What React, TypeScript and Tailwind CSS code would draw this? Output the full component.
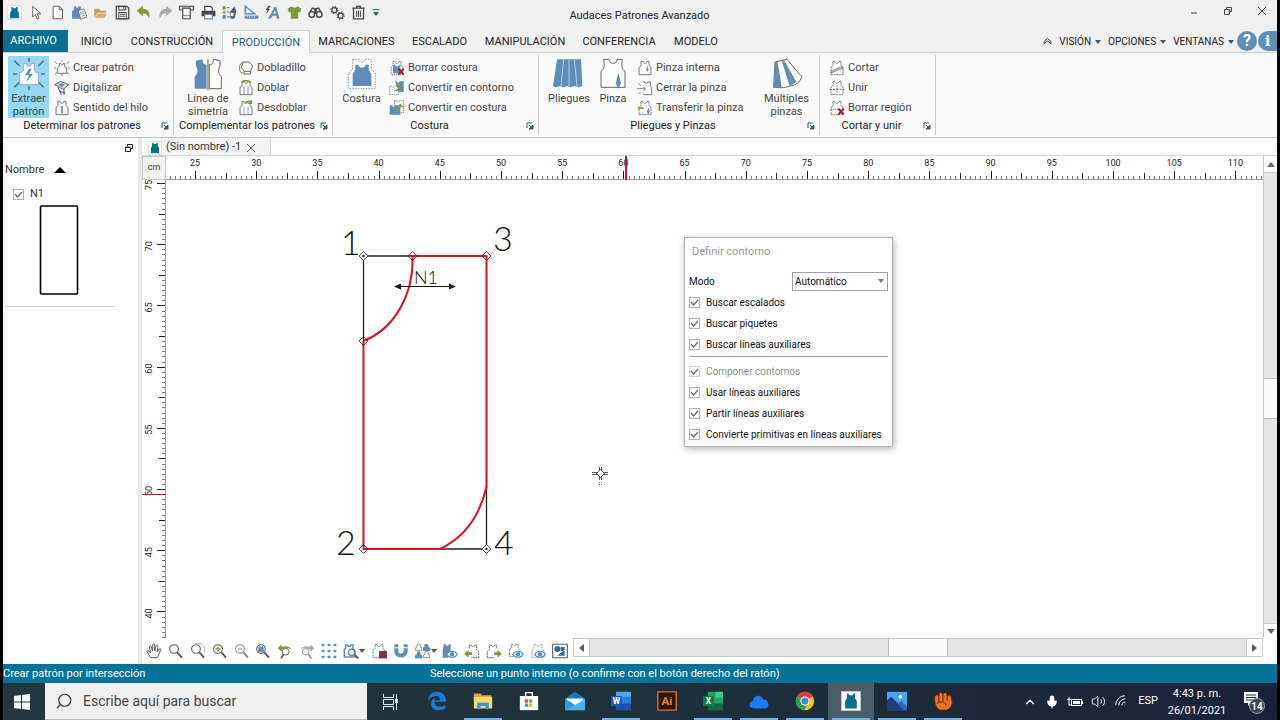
import { ReactNode, useEffect, useRef, useState } from 'react';
import { ChevronUp, Mic, Search, Volume2, Wifi } from 'lucide-react';

const VEST = 'M6 2h3c0 4 6 4 6 0h3v5c0 2 1 3 3 4v11H3V11c2-1 3-2 3-4z';
const BLUE = '#5d8db8';
const GREY = '#5a5a5a';
const GREEN = '#7c9a3a';

function Svg({ children, size = 16 }: { children: ReactNode; size?: number }) {
  return (
    <svg width={size} height={size} viewBox="0 0 24 24" fill="none" className="shrink-0" aria-hidden="true">
      {children}
    </svg>
  );
}

function Vest({ fill = 'none', stroke = GREY, dash }: { fill?: string; stroke?: string; dash?: string }) {
  return <path d={VEST} fill={fill} stroke={stroke} strokeWidth="1.2" strokeDasharray={dash} />;
}

function Lens({ sign, color = GREY }: { sign?: ReactNode; color?: string }) {
  return (
    <>
      <circle cx="9" cy="9" r="6.5" stroke={color} strokeWidth="1.6" fill="#fff" />
      <path d="M14 14l7 8" stroke={color} strokeWidth="3" />
      {sign}
    </>
  );
}

function Rays() {
  return (
    <path d="M1 2l4 4M23 2l-4 4M12 0v3M0 12h3M24 12h-3M1 22l4-4M23 22l-4-4M12 24v-3" stroke="#47799b" strokeWidth="1.2" />
  );
}

function Eye() {
  return (
    <>
      <path d="M7 17c4-6 12-6 16 0-4 6-12 6-16 0z" fill="#fff" stroke={BLUE} strokeWidth="1.6" />
      <circle cx="15" cy="17" r="3.4" fill={BLUE} />
    </>
  );
}

function Cross() {
  return <path d="M14 13l8 9M22 13l-8 9" stroke="#a51d2d" strokeWidth="3" />;
}

function Down({ className = '' }: { className?: string }) {
  return (
    <svg width="6" height="4" viewBox="0 0 6 4" className={`shrink-0 ${className}`} aria-hidden="true">
      <path d="M0 0h6L3 4z" fill="currentColor" />
    </svg>
  );
}

function Logo() {
  return (
    <>
      <path d="M.5.5h23v23H.5z" fill="#fff" stroke="#b5d0dc" />
      <path d="M7 3h2c0 3 6 3 6 0h2v6l2 3v9H5v-9l2-3z" fill="#066f93" />
    </>
  );
}

const quickTools: { label: string; icon: ReactNode }[] = [
  { label: 'Audaces', icon: <Logo /> },
  { label: 'Seleccionar', icon: <path d="M6 2v17l4-4 3 7 3-1-3-7h6z" stroke={GREY} strokeWidth="1.5" fill="#fff" /> },
  { label: 'Nuevo', icon: <path d="M5 2h10l5 5v15H5zM15 2v5h5" stroke={GREY} strokeWidth="1.5" fill="#fff" /> },
  {
    label: 'Nuevo patrón',
    icon: (
      <>
        <path d="M3 2h3c0 3 5 3 5 0h3v6l3 2v12H0V10l3-2z" fill={BLUE} />
        <path d="M10 9l9-3 5 13-10 4z" fill="#fff" stroke={GREY} strokeWidth="1.2" />
        <path d="M13 12l6-2M14 15l6-2M15 18l6-2" stroke={GREY} />
      </>
    ),
  },
  {
    label: 'Abrir',
    icon: (
      <>
        <path d="M2 20V6h8l2 3h9v4" fill="#c69a63" />
        <path d="M2 21l5-8h16l-4 8z" fill="#d8a76a" stroke="#fff" />
      </>
    ),
  },
  {
    label: 'Guardar',
    icon: (
      <>
        <path d="M2 2h17l3 3v17H2z" stroke="#444" strokeWidth="2" />
        <path d="M6 2h11v6H6zM6 12h12v10H6z" stroke="#444" strokeWidth="1.6" />
        <path d="M8 15h8M8 18h8M14 3v4" stroke="#444" strokeWidth="1.4" />
      </>
    ),
  },
  { label: 'Deshacer', icon: <path d="M1 9l10-8v5c8 0 12 6 10 15-2-5-5-8-10-8v5z" fill={GREEN} /> },
  { label: 'Rehacer', icon: <path d="M23 9L13 1v5C5 6 1 12 3 21c2-5 5-8 10-8v5z" fill="#ababab" /> },
  {
    label: 'Plotter',
    icon: (
      <>
        <path d="M1 2h22v6H1z" stroke="#444" strokeWidth="1.8" />
        <path d="M6 5h12v17H6z" stroke="#444" strokeWidth="1.8" fill="#f6f6f6" />
        <path d="M6 17h12" stroke="#444" />
      </>
    ),
  },
  {
    label: 'Imprimir',
    icon: (
      <>
        <path d="M6 9V2h9l3 3v4" stroke="#444" strokeWidth="2" fill="#fff" />
        <path d="M1 9h22v9h-5v-3H6v3H1z" fill="#444" />
        <path d="M6 15h12v7H6z" fill="#fff" stroke={BLUE} strokeWidth="2" />
      </>
    ),
  },
  {
    label: 'Materiales',
    icon: (
      <>
        <path d="M1 2h5v5H1z" fill="#6d9540" />
        <path d="M1 9h5v5H1z" fill="#d3a34c" />
        <path d="M1 16h5v6H1z" fill={BLUE} />
        <path d="M8 4h4M8 11h3M8 19h5" stroke={BLUE} strokeWidth="2" />
        <path d="M12 12l8-10 3 8-3 12h-6z" fill="#55616b" />
        <path d="M14 12l5 1-1 5-4-1z" fill="#fff" />
      </>
    ),
  },
  {
    label: 'Medir',
    icon: (
      <>
        <path d="M2 2v12h15z" stroke={BLUE} strokeWidth="2.4" />
        <path d="M1 17h22v5H1z" fill={BLUE} />
        <path d="M5 17v3M9 17v3M13 17v3M17 17v3" stroke="#fff" />
      </>
    ),
  },
  {
    label: 'Texto automático',
    icon: (
      <>
        <path d="M5 22L15 3h3l5 19h-4l-1-5h-6l-3 5zM13 14h4l-1-6z" fill={BLUE} fillRule="evenodd" />
        <path d="M6 1L1 8h3l-2 6 6-8H5l4-5z" fill="#333" />
      </>
    ),
  },
  { label: 'Prenda', icon: <path d="M7 2c2 3 8 3 10 0l6 4-2 6-3-1v11H6V11l-3 1-2-6z" fill={GREEN} /> },
  {
    label: 'Buscar',
    icon: (
      <>
        <circle cx="6" cy="15" r="4.5" stroke="#444" strokeWidth="2.2" />
        <circle cx="18" cy="15" r="4.5" stroke="#444" strokeWidth="2.2" />
        <path d="M3 12l4-7 4 1v8M21 12l-4-7-4 1v8" stroke="#444" strokeWidth="2.2" />
      </>
    ),
  },
  {
    label: 'Configurar',
    icon: (
      <>
        <circle cx="7" cy="8" r="4" stroke="#444" strokeWidth="2" />
        <circle cx="7" cy="8" r="5.5" stroke="#444" strokeWidth="2" strokeDasharray="2 2.3" />
        <circle cx="17" cy="17" r="4" stroke="#444" strokeWidth="2" />
        <circle cx="17" cy="17" r="5.5" stroke="#444" strokeWidth="2" strokeDasharray="2 2.3" />
      </>
    ),
  },
  {
    label: 'Eliminar',
    icon: (
      <>
        <path d="M2 5h20M9 5V2h6v3M4 5v17h16V5" stroke="#444" strokeWidth="2" />
        <path d="M9 9v10M12 9v10M15 9v10" stroke="#444" strokeWidth="1.6" />
      </>
    ),
  },
];

const tabs = [
  { name: 'INICIO', width: 'w-[51px]' },
  { name: 'CONSTRUCCIÓN', width: 'w-[100px]' },
  { name: 'PRODUCCIÓN', width: 'w-[88px]' },
  { name: 'MARCACIONES', width: 'w-[93px]' },
  { name: 'ESCALADO', width: 'w-[73px]' },
  { name: 'MANIPULACIÓN', width: 'w-[98px]' },
  { name: 'CONFERENCIA', width: 'w-[90px]' },
  { name: 'MODELO', width: 'w-[64px]' },
];

function BigTool({ icon, lines, width, active }: { icon: ReactNode; lines: string[]; width: string; active?: boolean }) {
  return (
    <button className={`flex h-[62px] shrink-0 flex-col items-center pt-[2px] text-[11px] leading-[13px] ${width} ${active ? 'bg-[#94d8f1]' : ''}`}>
      <Svg size={32}>{icon}</Svg>
      <span className="mt-[2px] whitespace-nowrap">
        {lines.map(line => (
          <span key={line} className="block">{line}</span>
        ))}
      </span>
    </button>
  );
}

function SmallTools({ items }: { items: { label: string; icon: ReactNode }[] }) {
  return (
    <div className="flex flex-col pt-[2px]">
      {items.map(item => (
        <button key={item.label} className="flex h-[21px] items-center gap-[3px] whitespace-nowrap text-[11px]">
          <Svg>{item.icon}</Svg>
          {item.label}
        </button>
      ))}
    </div>
  );
}

function Group({ title, width, pad, children }: { title: string; width: string; pad: string; children: ReactNode }) {
  return (
    <section className={`my-[2px] flex shrink-0 flex-col border-r border-[#c9c9c9] ${width}`}>
      <div className={`flex h-[63px] pt-[1px] ${pad}`}>{children}</div>
      <div className="flex h-[18px] items-center pr-1 pb-[2px] text-[11px] text-[#222]">
        <span className="flex-1 whitespace-nowrap text-center">{title}</span>
        <button aria-label={`Opciones de ${title}`}>
          <svg width="8" height="8" viewBox="0 0 8 8" fill="none">
            <path d="M1 6V1h5" stroke="#2f5f6f" />
            <path d="M3 3l3 3M7 3v4H3z" stroke="#2f5f6f" fill="#2f5f6f" />
          </svg>
        </button>
      </div>
    </section>
  );
}

function Ribbon() {
  return (
    <div className="flex h-[85px] shrink-0 overflow-hidden border-b border-[#c4c4c4] bg-[#fafafa] text-[#444]">
      <Group title="Determinar los patrones" width="w-[171px]" pad="pl-[5px] gap-[5px]">
        <BigTool
          active
          width="w-[41px]"
          lines={['Extraer', 'patrón']}
          icon={
            <>
              <Rays />
              <path d="M8 4h2c0 3 4 3 4 0h2v4c0 2 1 3 3 3v9H5v-9c2 0 3-1 3-3z" fill="#fff" stroke="#8a9aa5" strokeWidth=".6" />
              <path d="M12 8l-3 5h3l-2 5 5-6h-3l2-4z" fill={BLUE} />
            </>
          }
        />
        <SmallTools
          items={[
            {
              label: 'Crear patrón',
              icon: (
                <>
                  <Rays />
                  <path d="M8 5h2c0 3 4 3 4 0h2v5l3 2v8H5v-8l3-2z" stroke={GREY} strokeWidth="1.3" fill="#fff" />
                </>
              ),
            },
            {
              label: 'Digitalizar',
              icon: (
                <>
                  <path d="M1 7l9-5 12 5-8 7z" fill="#cbd9e5" stroke={GREY} strokeWidth="1.4" />
                  <path d="M6 7l5-2 5 2-4 3z" fill={BLUE} />
                  <path d="M6 11l5 11M15 14v8M9 17l8 3" stroke={GREY} strokeWidth="1.6" />
                </>
              ),
            },
            { label: 'Sentido del hilo', icon: <><Vest /><path d="M12 9v11" stroke={BLUE} strokeWidth="2.4" /></> },
          ]}
        />
      </Group>

      <Group title="Complementar los patrones" width="w-[159px]" pad="pl-[13px] gap-[9px]">
        <BigTool
          width="w-[42px]"
          lines={['Línea de', 'simetría']}
          icon={
            <>
              <path d="M11 23H2v-9c2-2 3-4 1-8V2l5-1c0 3 1 4 3 4z" fill={BLUE} />
              <path d="M13 23h9v-9c-2-2-3-4-1-8V2l-5-1c0 3-1 4-3 4z" fill="#fff" stroke={GREY} strokeWidth=".7" />
              <path d="M12 1v23" stroke={GREEN} strokeWidth="1" />
            </>
          }
        />
        <SmallTools
          items={[
            {
              label: 'Dobladillo',
              icon: (
                <>
                  <path d="M8 3h9l5 6-3 8H9l-4-6z" stroke={GREY} strokeWidth="1.4" />
                  <path d="M9 17v4h10v-4" stroke={GREY} strokeWidth="1.4" />
                  <path d="M8 3C0 7 1 17 7 20" stroke={GREEN} strokeWidth="1.6" />
                </>
              ),
            },
            { label: 'Doblar', icon: <><Vest /><path d="M9 10v12M15 10v12" stroke={GREY} /><path d="M5 4c4-4 10-4 14 0" stroke={GREEN} strokeWidth="2.4" /></> },
            { label: 'Desdoblar', icon: <><Vest /><path d="M9 10v12M15 10v12" stroke={BLUE} /><path d="M10 5c3-4 7-4 10-1M20 0v5h-5" stroke={GREEN} strokeWidth="2" /></> },
          ]}
        />
      </Group>

      <Group title="Costura" width="w-[206px]" pad="pl-[8px] gap-[7px]">
        <BigTool
          width="w-[41px]"
          lines={['Costura']}
          icon={
            <>
              <path d="M5 1h5c0 3 4 3 4 0h5v6c0 2 1 3 3 4v12H2V11c2-1 3-2 3-4z" stroke="#7290ab" strokeWidth=".7" strokeDasharray="1 1" />
              <path d="M7 5h2c1 3 5 3 6 0h2v4l2 3v9H5v-9l2-3z" fill={BLUE} />
            </>
          }
        />
        <SmallTools
          items={[
            { label: 'Borrar costura', icon: <><Vest dash="2 1" /><path d="M7 7h2c0 3 6 3 6 0h2v13H6v-8z" fill={BLUE} /><Cross /></> },
            {
              label: 'Convertir en contorno',
              icon: (
                <>
                  <path d="M9 2h3c0 3 4 3 4 0h6v16H11V7z" fill={BLUE} />
                  <path d="M1 9h3c0 3 4 3 4 0h6v13H1z" fill="#fff" stroke={GREY} strokeDasharray="2 1" />
                  <path d="M8 16c5 0 8-3 8-8M12 11l4-4 4 4" stroke={GREEN} strokeWidth="2" />
                </>
              ),
            },
            {
              label: 'Convertir en costura',
              icon: (
                <>
                  <path d="M8 1h4c0 3 4 3 4 0h6v18H9z" stroke={GREY} strokeDasharray="2 1" />
                  <path d="M1 8h4c0 3 4 3 4 0h5l3 4v10H1z" fill={BLUE} />
                  <path d="M8 18c7 0 9-4 9-10M13 11l4-4 4 4" stroke={GREEN} strokeWidth="2" />
                </>
              ),
            },
          ]}
        />
      </Group>

      <Group title="Pliegues y Pinzas" width="w-[281px]" pad="pl-[8px]">
        <BigTool
          width="w-[44px]"
          lines={['Pliegues']}
          icon={
            <>
              <path d="M3 1h18l1 20-3 1-3-1-3 1-2-1-3 1-3-1-3 1-2-1z" fill={BLUE} />
              <path d="M8 1L6 21M12 1v20M16 1l2 20" stroke="#b8d2e8" strokeWidth=".7" />
            </>
          }
        />
        <BigTool
          width="w-[44px]"
          lines={['Pinza']}
          icon={
            <>
              <path d="M5 1h4c0 4 6 4 6 0h4c-1 5 0 8 2 9v12H3V10c2-1 3-4 2-9z" fill="#fff" stroke={GREY} strokeWidth=".7" />
              <path d="M16 11l2 8-2 4-2-4z" fill={BLUE} />
            </>
          }
        />
        <div className="ml-0.5 flex flex-1">
          <SmallTools
            items={[
              { label: 'Pinza interna', icon: <><Vest /><path d="M16 9l1 5-1 4-2-4z" fill={BLUE} /></> },
              { label: 'Cerrar la pinza', icon: <><path d="M9 3h3c0 3 4 3 4 0h4v6l2 2v11H9" stroke={GREY} strokeWidth="1.2" /><path d="M2 5l4 4M0 13h12M2 21l4-4M9 10l4 3-4 3" stroke={BLUE} strokeWidth="1.4" /></> },
              { label: 'Transferir la pinza', icon: <><Vest dash="3 1" /><path d="M1 12h9" stroke={GREEN} strokeWidth="2.4" /><path d="M17 12l2 5-2 6-2-6z" fill={BLUE} /></> },
            ]}
          />
        </div>
        <BigTool
          width="w-[65px]"
          lines={['Múltiples', 'pinzas']}
          icon={
            <>
              <path d="M3 3l9-2 11 13c-1 4-5 7-9 7-4 2-9 1-12 1z" fill="#fff" stroke={GREY} strokeWidth=".7" />
              <path d="M3 3h2l3 19H2zM8 2h2l9 16-5 3z" fill={BLUE} />
            </>
          }
        />
      </Group>

      <Group title="Cortar y unir" width="w-[116px]" pad="pl-[9px]">
        <SmallTools
          items={[
            { label: 'Cortar', icon: <><Vest dash="3 1" /><path d="M3 16c6 0 10-6 18-6v3c-8 0-12 6-18 6z" fill="#bbb" stroke="#777" /></> },
            { label: 'Unir', icon: <><Vest dash="3 1" /><path d="M1 14h22" stroke={GREY} strokeWidth="1.4" strokeDasharray="3 2" /><path d="M12 8v12" stroke={GREY} strokeDasharray="3 1" /></> },
            { label: 'Borrar región', icon: <><Vest dash="3 1" /><path d="M3 14h12" stroke={GREY} strokeDasharray="2 1" /><Cross /></> },
          ]}
        />
      </Group>
    </div>
  );
}

function Check({ label, disabled, className = '' }: { label: string; disabled?: boolean; className?: string }) {
  const [on, setOn] = useState(true);
  return (
    <label className={`flex items-center gap-1.5 whitespace-nowrap ${disabled ? 'text-[#8b8b8b]' : ''} ${className}`}>
      <span className="grid">
        <input
          type="checkbox"
          checked={on}
          disabled={disabled}
          onChange={e => setOn(e.target.checked)}
          className={`h-[11px] w-[11px] appearance-none border bg-white [grid-area:1/1] ${disabled ? 'border-[#d4d4d4]' : 'border-[#b0b0b0]'}`}
        />
        {on && (
          <svg width="11" height="11" viewBox="0 0 11 11" fill="none" className="pointer-events-none [grid-area:1/1]">
            <path d="M2 5l2.5 3L9 3" stroke="#666" strokeWidth="1.2" />
          </svg>
        )}
      </span>
      {label}
    </label>
  );
}

const STEP = 61.2; // pixels per 5 cm

function tickLength(i: number) {
  if (i % 12 === 0) return 8;
  return i % 6 === 0 ? 6 : 3;
}

// only as many ticks and labels as fit are drawn
function useSize() {
  const ref = useRef<SVGSVGElement>(null);
  const [size, setSize] = useState({ width: 0, height: 0 });

  useEffect(() => {
    if (!ref.current) return;
    const observer = new ResizeObserver(([entry]) => {
      setSize({ width: entry.contentRect.width, height: entry.contentRect.height });
    });
    observer.observe(ref.current);
    return () => observer.disconnect();
  }, []);

  return { ref, ...size };
}

function TopRuler() {
  const { ref, width } = useSize();
  const count = Math.max(0, Math.floor(((width - 29) * 12) / STEP) + 6);
  const labels = Math.max(0, Math.floor((width - 40) / STEP) + 1);
  return (
    <svg ref={ref} className="h-6 min-w-0 flex-1 overflow-hidden bg-white" aria-label="Regla horizontal">
      {Array.from({ length: count }, (_, n) => n - 5).map(i => (
        <rect key={i} x={Math.round(29 + (i * STEP) / 12)} y={23 - tickLength(i)} width="1" height={tickLength(i)} fill={i % 6 === 0 ? '#222' : '#777'} />
      ))}
      {Array.from({ length: labels }, (_, i) => (
        <text key={i} x={29 + i * STEP} y="10" textAnchor="middle" fontSize="9" fill="#222">
          {25 + i * 5}
        </text>
      ))}
      <rect y="23" width="100%" height="1" fill="#999" />
      <rect x="459" width="2" height="24" fill="#c8102e" />
    </svg>
  );
}

function SideRuler() {
  const { ref, height } = useSize();
  const count = Math.max(0, Math.floor(((height - 4) * 12) / STEP) + 1);
  const labels = Math.max(0, Math.floor((height - 12) / STEP) + 1);
  return (
    <svg ref={ref} className="h-full w-6 shrink-0 overflow-hidden bg-white" aria-label="Regla vertical">
      {Array.from({ length: count }, (_, i) => (
        <rect key={i} x={23 - tickLength(i)} y={Math.round(3 + (i * STEP) / 12)} width={tickLength(i)} height="1" fill={i % 6 === 0 ? '#222' : '#777'} />
      ))}
      {Array.from({ length: labels }, (_, i) => (
        <text key={i} transform={`translate(10 ${5 + i * STEP}) rotate(-90)`} textAnchor="middle" fontSize="9" fill="#222">
          {75 - i * 5}
        </text>
      ))}
      <rect x="23" width="1" height="100%" fill="#999" />
      <rect y="314" width="24" height="1" fill="#c8102e" />
    </svg>
  );
}

function Node({ x, y, dot }: { x: number; y: number; dot?: boolean }) {
  return (
    <g stroke="#222" strokeWidth=".8" fill="none">
      <path d={`M${x - 4.5} ${y}l4.5-4.5 4.5 4.5-4.5 4.5z`} fill={dot ? '#fff' : 'none'} />
      {dot && <circle cx={x} cy={y} r="1.2" fill="#222" stroke="none" />}
    </g>
  );
}

function Drawing() {
  return (
    <svg className="block h-full w-full" fill="none" aria-label="Patrón N1">
      <path d="M246 76H197.5V161M320.5 305V369H274" stroke="#222" strokeWidth="1.3" />
      <path
        d="M197.5 161C228 149 248 115 246.5 76H320.5V307C313 339 297 358 274 369H197.5V161"
        stroke="#e00f18"
        strokeWidth="2"
        strokeLinejoin="round"
      />
      <Node x={197.5} y={76} dot />
      <Node x={246.5} y={76} />
      <Node x={320.5} y={76} />
      <Node x={197.5} y={161} />
      <Node x={197.5} y={369} />
      <Node x={320.5} y={369} dot />
      <path d="M230 106.5H288" stroke="#111" strokeWidth="1.2" />
      <path d="M228 106.5l7-3v6zM290 106.5l-7-3v6z" fill="#111" />
      <g fill="#111" fontFamily="Lato, sans-serif" fontWeight="300" fontSize="34">
        <text x="175" y="75">1</text>
        <text x="327" y="71">3</text>
        <text x="170" y="375">2</text>
        <text x="328" y="375">4</text>
        <text x="248" y="104" fontSize="18">N1</text>
      </g>
      <g stroke="#555">
        <path d="M426 292.5h5M426 294.5h5M437 292.5h5M437 294.5h5M433.5 287v4M435.5 287v4M433.5 297v3M435.5 297v3" />
        <path d="M434.5 289.5l4 4-4 4-4-4z" fill="#fff" />
        <path d="M433.5 302v4M435.5 302v4" strokeDasharray="1 1" stroke="#999" />
      </g>
    </svg>
  );
}

function ContourDialog() {
  return (
    <div
      role="dialog"
      aria-label="Definir contorno"
      className="absolute left-[518px] top-[57px] w-[209px] border border-[#b0b0b0] bg-white px-1 pb-px text-[10px] text-[#111] shadow-[1px_2px_7px_rgba(0,0,0,0.3)]"
    >
      <h2 className="flex h-[33px] items-center pb-1 pl-[3px] text-[11px] text-[#999]">Definir contorno</h2>
      <div className="flex h-5 items-center justify-between">
        <label htmlFor="modo">Modo</label>
        <div className="grid items-center">
          <select id="modo" className="h-[19px] w-24 appearance-none border border-[#a0a0a0] bg-white pl-0.5 [grid-area:1/1]">
            <option>Automático</option>
            <option>Manual</option>
          </select>
          <Down className="pointer-events-none mr-1 justify-self-end text-[#777] [grid-area:1/1]" />
        </div>
      </div>
      <Check label="Buscar escalados" className="mt-px h-[21px]" />
      <Check label="Buscar piquetes" className="h-[21px]" />
      <Check label="Buscar líneas auxiliares" className="h-[21px]" />
      <hr className="mt-px mb-1 border-[#9a9a9a]" />
      <Check label="Componer contornos" disabled className="h-[21px]" />
      <Check label="Usar líneas auxiliares" className="h-[21px]" />
      <Check label="Partir líneas auxiliares" className="h-[21px]" />
      <Check label="Convierte primitivas en líneas auxiliares" className="h-[21px]" />
    </div>
  );
}

const viewTools: { label: string; icon: ReactNode; menu?: boolean }[] = [
  {
    label: 'Mover vista',
    icon: <path d="M7 22l-5-8c-2-3 1-4 3-1l2 2L5 6c0-2 2-2 3 0l2 6V3c0-2 3-2 3 0v9l2-8c1-2 3-1 3 1l-1 8 3-4c2-1 3 0 2 2l-5 11z" stroke={GREY} strokeWidth="1.5" fill="#fff" />,
  },
  { label: 'Zoom', icon: <Lens /> },
  { label: 'Zoom ventana', icon: <><Lens /><path d="M8 1h9l5 6v8" stroke={GREY} strokeDasharray="2 1" /></> },
  { label: 'Acercar', icon: <Lens sign={<path d="M9 5v8M5 9h8" stroke={GREEN} strokeWidth="2" />} /> },
  { label: 'Alejar', icon: <Lens color="#888" sign={<path d="M6 9h6" stroke="#b77" strokeWidth="1.6" />} /> },
  { label: 'Ajustar', icon: <Lens sign={<path d="M6 5h1c1 2 3 2 4 0h1l1 8H5z" fill={BLUE} stroke={BLUE} />} /> },
  { label: 'Zoom anterior', icon: <><circle cx="13" cy="13" r="5" stroke={GREY} strokeWidth="1.4" /><path d="M10 17l-4 6" stroke={GREY} strokeWidth="2.6" /><path d="M1 8l6-6v4c6-2 12-1 15 4-4-3-9-3-15 0v3z" fill={GREEN} /></> },
  { label: 'Zoom siguiente', icon: <><circle cx="10" cy="13" r="5" stroke="#999" strokeWidth="1.4" /><path d="M14 17l5 6" stroke="#999" strokeWidth="2.6" /><path d="M23 8l-6-6v4C11 4 5 5 2 10c4-3 9-3 15 0v3z" fill="#aaa" /></> },
  {
    label: 'Cuadrícula',
    icon: (
      <g fill={BLUE}>
        {[1, 10, 19].map(y => [1, 10, 19].map(x => <rect key={`${x}-${y}`} x={x} y={y} width="4" height="4" rx="1" />))}
      </g>
    ),
  },
  { label: 'Buscar patrón', menu: true, icon: <><path d="M4 3h3c0 3 5 3 5 0h3v6l3 3v9H2V10l2-2z" stroke={BLUE} strokeWidth="2.2" /><circle cx="13" cy="14" r="5" fill="#dbe7f1" stroke={GREY} strokeWidth="1.5" /><path d="M17 18l6 5" stroke={GREY} strokeWidth="3" /></> },
  { label: 'Quitar patrón', icon: <><Vest dash="3 1" /><path d="M12 12h12v11H12z" fill="#4a5560" /><Cross /></> },
  { label: 'Imán', icon: <><path d="M5 2v10c0 9 14 9 14 0V2" stroke={BLUE} strokeWidth="6" /><path d="M2 7h6M16 7h6" stroke="#fff" strokeWidth="1.6" /></> },
  {
    label: 'Patrones',
    menu: true,
    icon: (
      <>
        <path d="M3 3c0-2 5-2 5 0v3l2 1v4H1V7l2-1zM15 14c0-2 5-2 5 0v3l2 1v4h-9v-4l2-1z" fill="#fff" stroke={GREY} />
        <path d="M14 3c0-2 6-2 6 0v3l3 1v5H12V7l2-1zM3 14c0-2 5-2 5 0v3l3 1v5H0v-5l3-1z" fill={BLUE} />
      </>
    ),
  },
  { label: 'Ver relleno', icon: <><path d="M3 2h3c0 3 4 3 4 0h3v8l-4 12H1V10z" fill={BLUE} /><Eye /></> },
  { label: 'Patrón anterior', icon: <><path d="M8 8V3h3c0 3 5 3 5 0h3v7l3 3v9H11" stroke={GREY} strokeWidth="1.4" strokeDasharray="3 1" /><path d="M0 16l7-6v4h5v4H7v4z" fill={GREEN} /></> },
  { label: 'Patrón siguiente', icon: <><path d="M16 8V3h-3c0 3-5 3-5 0H5v7l-3 3v9h11" stroke={GREY} strokeWidth="1.4" strokeDasharray="3 1" /><path d="M24 16l-7-6v4h-5v4h5v4z" fill={GREEN} /></> },
  { label: 'Ver patrón', icon: <><path d="M5 2h3c0 3 4 3 4 0h3v5l3 3M8 20H2V10l3-3V2" stroke={GREY} strokeWidth="1.2" strokeDasharray="3 1" /><Eye /></> },
  { label: 'Ver costura', icon: <><Vest dash="1 1" /><Eye /></> },
  { label: 'Ver formas', icon: <><path d="M1 2h22v20H1z" stroke={GREY} strokeWidth="1.6" fill="#fff" /><circle cx="8" cy="9" r="4.5" fill="#35648c" /><path d="M13 6h6v6h-6zM8 19h11v-9z" fill="#35648c" /></> },
];

function Workspace() {
  return (
    <main className="flex min-h-0 flex-1 bg-white">
      <aside className="w-[135px] shrink-0 text-[11px] text-[#333]">
        <div className="flex h-5 items-center justify-end pr-[5px]">
          <button aria-label="Separar panel">
            <svg width="8" height="8" viewBox="0 0 8 8" fill="none" stroke="#222">
              <path d="M2.5 2V.5h5v4H6M.5 3.5h5v4h-5zM.5 3h5" />
            </svg>
          </button>
        </div>
        <button className="mt-[3px] ml-[2px] flex h-[18px] items-center gap-2.5">
          Nombre
          <svg width="12" height="6" viewBox="0 0 12 6"><path d="M6 0l6 6H0z" fill="#000" /></svg>
        </button>
        <Check label="N1" className="mt-1.5 ml-[10px] h-[18px]" />
        <svg width="40" height="90" viewBox="0 0 40 90" fill="none" className="mt-[2px] ml-9">
          <rect x="1.5" y="1" width="37" height="88" rx="1" stroke="#000" strokeWidth="1.6" />
        </svg>
        <hr className="mt-[11px] mr-[23px] ml-[2px] border-[#ccc]" />
      </aside>
      <div className="w-1 shrink-0 bg-[#e8e8e8]" />
      <div className="flex min-w-0 flex-1 flex-col">
        <div className="flex h-[18px] shrink-0 items-center border-b border-[#d5d5d5] pl-[2px]">
          <div className="flex h-full w-[127px] items-center gap-1 border-r border-[#d0d0d0] bg-[#f4f4f4] pt-[2px] pl-1 text-[11px] text-[#333]">
            <Svg size={14}><Logo /></Svg>
            <span className="flex-1 whitespace-nowrap">(Sin nombre) -1</span>
            <button aria-label="Cerrar documento" className="mr-[15px]">
              <svg width="8" height="8" viewBox="0 0 8 8" fill="none"><path d="M0 0l8 8M8 0L0 8" stroke="#555" /></svg>
            </button>
          </div>
        </div>
        <div className="flex min-h-0 flex-1">
          <div className="flex min-w-0 flex-1 flex-col">
            <div className="flex h-6 shrink-0">
              <div className="flex w-6 shrink-0 items-center justify-center border border-[#c8c8c8] bg-[#f2f2f2] text-[9px] text-[#333]">cm</div>
              <TopRuler />
            </div>
            <div className="flex min-h-0 flex-1">
              <SideRuler />
              <div className="relative min-w-0 flex-1">
                <Drawing />
                <ContourDialog />
              </div>
            </div>
          </div>
          <div className="flex w-[14px] shrink-0 flex-col border-l border-[#ccc] bg-[#e5e5e5]">
            <button aria-label="Subir" className="flex h-[17px] items-center justify-center border-b border-[#ccc] bg-white">
              <svg width="8" height="5" viewBox="0 0 8 5"><path d="M0 5h8L4 0z" fill="#666" /></svg>
            </button>
            <div className="flex-[204]" />
            <div className="h-[41px] border-y border-[#bbb] bg-[#fafafa]" />
            <div className="flex-[204]" />
            <button aria-label="Bajar" className="flex h-[15px] items-center justify-center border-t border-[#ccc] bg-white">
              <svg width="8" height="5" viewBox="0 0 8 5"><path d="M0 0h8L4 5z" fill="#666" /></svg>
            </button>
          </div>
        </div>
        <div className="flex h-[26px] shrink-0 items-start pr-[14px]">
          <div className="flex w-[427px] shrink-0 items-center justify-between self-stretch pr-px pl-1">
            {viewTools.map(tool => (
              <button key={tool.label} aria-label={tool.label} className="flex items-center">
                <Svg>{tool.icon}</Svg>
                {tool.menu && <Down className="text-[#555]" />}
              </button>
            ))}
          </div>
          <div className="ml-1 flex h-[19px] min-w-0 flex-1 border border-[#ccc] bg-[#e5e5e5]">
            <button aria-label="Izquierda" className="flex w-4 items-center justify-center border-r border-[#ccc] bg-white">
              <svg width="5" height="8" viewBox="0 0 5 8"><path d="M5 0v8L0 4z" fill="#555" /></svg>
            </button>
            <div className="flex-[299]" />
            <div className="w-[60px] border-x border-[#bbb] bg-[#fafafa]" />
            <div className="flex-[299]" />
            <button aria-label="Derecha" className="flex w-4 items-center justify-center border-l border-[#ccc] bg-white">
              <svg width="5" height="8" viewBox="0 0 5 8"><path d="M0 0v8l5-4z" fill="#555" /></svg>
            </button>
          </div>
        </div>
      </div>
    </main>
  );
}

const taskApps: { label: string; icon: ReactNode; open?: boolean; active?: boolean }[] = [
  {
    label: 'Edge',
    icon: <path d="M1 12C2 4 7 1 12 1c7 0 11 5 11 12H9c0 4 3 6 7 6 2 0 4-1 6-2v4c-2 1-5 2-8 2-6 0-10-4-9-9 0-2 2-5 5-6-1 1-1 2-1 3h7c0-3-2-5-5-5-4 0-8 2-10 6z" fill="#1a7ad4" />,
  },
  {
    label: 'Explorador',
    open: true,
    icon: (
      <>
        <path d="M1 3h8l2 2h11v6H1z" fill="#e0a526" />
        <path d="M1 7h22v14H1z" fill="#f8d775" />
        <path d="M5 22v-8h14v8h-4v-4H9v4z" fill="#3e94cf" />
      </>
    ),
  },
  {
    label: 'Tienda',
    icon: (
      <>
        <path d="M8 7V2h8v5" stroke="#fff" strokeWidth="1.5" />
        <path d="M1 6h22v17H1z" fill="#fff" />
        <path d="M7 10h4v4H7z" fill="#e5532d" />
        <path d="M12 10h4v4h-4z" fill="#7cb82f" />
        <path d="M7 15h4v4H7z" fill="#22a2e0" />
        <path d="M12 15h4v4h-4z" fill="#f4b91c" />
      </>
    ),
  },
  {
    label: 'Correo',
    icon: (
      <>
        <path d="M0 9l12-8 12 8v14H0z" fill="#1874c4" />
        <path d="M2 9h20v2l-10 7L2 11z" fill="#fff" />
        <path d="M0 9l12 8 12-8v14H0z" fill="#45b5ef" />
        <path d="M0 9l12 8L0 23z" fill="#2d9ae0" />
      </>
    ),
  },
  {
    label: 'Word',
    open: true,
    icon: (
      <>
        <path d="M6 1h18v22H6z" fill="#2b7cd3" />
        <path d="M6 1h18v6H6z" fill="#55a5ee" />
        <path d="M6 15h18v8H6z" fill="#1b51a8" />
        <path d="M0 6h13v12H0z" fill="#185abd" />
        <text x="6.5" y="15.5" textAnchor="middle" fontSize="10" fontWeight="700" fill="#fff">W</text>
      </>
    ),
  },
  {
    label: 'Illustrator',
    icon: (
      <>
        <path d="M1 1h22v22H1z" fill="#2b1406" stroke="#e0781a" strokeWidth="1.6" />
        <text x="12" y="17" textAnchor="middle" fontSize="14" fontWeight="600" fill="#f58a1c">Ai</text>
      </>
    ),
  },
  {
    label: 'Excel',
    open: true,
    icon: (
      <>
        <path d="M6 1h18v22H6z" fill="#21a366" />
        <path d="M15 1h9v7h-9z" fill="#41cb86" />
        <path d="M6 15h18v8H6z" fill="#126b3d" />
        <path d="M0 6h13v12H0z" fill="#107c41" />
        <text x="6.5" y="15.5" textAnchor="middle" fontSize="10" fontWeight="700" fill="#fff">X</text>
      </>
    ),
  },
  { label: 'Nube', open: true, icon: <path d="M6 21c-7 0-7-8-1-9 0-8 10-8 12-2 7 0 9 11 2 11z" fill="#197bf5" /> },
  {
    label: 'Chrome',
    open: true,
    icon: (
      <>
        <circle cx="12" cy="12" r="11" fill="#fbc116" />
        <path d="M12 12L2.5 6.5a11 11 0 0 1 19 0z" fill="#e33b2e" />
        <path d="M2.5 6.5a11 11 0 0 0 8.5 16.5l4-7-3-4z" fill="#2ba24c" />
        <circle cx="12" cy="12" r="5.5" fill="#fff" />
        <circle cx="12" cy="12" r="4.2" fill="#4285f4" />
      </>
    ),
  },
  { label: 'Audaces Patrones', open: true, active: true, icon: <Logo /> },
  {
    label: 'Fotos',
    open: true,
    icon: (
      <>
        <path d="M0 1h24v22H0z" fill="#4aa3ee" />
        <path d="M0 11l5-4 17 16H0z" fill="#1d3f7c" />
        <path d="M13 16l4-4 7 7v4h-5z" fill="#2c63b4" />
        <circle cx="16" cy="7" r="2.2" fill="#fff" />
      </>
    ),
  },
  {
    label: 'Garra',
    open: true,
    icon: (
      <>
        <path d="M2 12V7c1-3 4-3 5-1V4c1-3 4-3 5 0 1-3 4-2 5 0v2c2-2 4-1 5 1l1 5c1 5-3 10-7 11H9c-4-1-7-6-7-11z" fill="#e8702a" stroke="#5c2209" strokeWidth="1.2" />
        <path d="M7 5v8M12 4v8M17 5v7M5 15c4-3 9-3 11 2" stroke="#5c2209" strokeWidth="1.2" />
      </>
    ),
  },
];

function Taskbar() {
  return (
    <footer className="flex h-[37px] shrink-0 bg-linear-to-r from-[#22383e] via-[#1e303b] to-[#19223a] text-white">
      <button aria-label="Inicio" className="flex w-[42px] shrink-0 items-center justify-center pr-1">
        <svg width="16" height="16" viewBox="0 0 16 16" fill="#fff">
          <path d="M0 2l7-1v6.5H0zM8 1l8-1v7.5H8zM0 8.5h7V15l-7-1zM8 8.5h8V16l-8-1z" />
        </svg>
      </button>
      <label className="flex w-[322px] shrink-0 items-center gap-2.5 border-b border-[#bbb] bg-[#f0f0f0] pl-[10px] text-[#333]">
        <Search size={18} strokeWidth={1.6} className="-scale-x-100" />
        <input aria-label="Buscar" placeholder="Escribe aquí para buscar" className="w-60 bg-transparent text-[14px] outline-none placeholder:text-[#444]" />
      </label>
      <button aria-label="Vista de tareas" className="flex w-[47px] shrink-0 items-center justify-center">
        <svg width="16" height="16" viewBox="0 0 16 16" fill="none" stroke="#e8e8e8">
          <path d="M.5 0v3.5h10V0M.5 5.5h10v5H.5zM.5 16v-3.5h10V16M13.5 0v16" />
          <path d="M12 5h3v4h-3z" fill="#e8e8e8" stroke="none" />
        </svg>
      </button>
      <nav className="flex shrink-0" aria-label="Aplicaciones">
        {taskApps.map(app => (
          <button key={app.label} aria-label={app.label} className={`flex w-[46px] flex-col items-center px-1 ${app.active ? 'bg-[#4b5d68]' : ''}`}>
            <span className="flex flex-1 items-center"><Svg size={20}>{app.icon}</Svg></span>
            <span className={`h-[2px] w-full ${app.open ? 'bg-[#76b0e2]' : ''}`} />
          </button>
        ))}
      </nav>
      <div className="flex flex-1 items-center justify-end gap-2 pr-3 text-[11px]">
        <ChevronUp size={14} />
        <Mic size={14} fill="#fff" />
        <svg width="16" height="12" viewBox="0 0 16 12" fill="none" stroke="#fff">
          <path d="M4.5 3.5h10v6h-10zM2 1v2M0 3.5h4M2 4v5h2M15.5 5v3" />
          <path d="M6 5h7v3H6z" fill="#fff" stroke="none" />
        </svg>
        <Volume2 size={15} strokeWidth={1.5} />
        <Wifi size={15} strokeWidth={1.5} className="-rotate-45" />
        <span className="w-[22px] text-center">ESP</span>
        <div className="w-[60px] text-center leading-[17px]">
          <div>4:43 p. m.</div>
          <div>26/01/2021</div>
        </div>
        <button aria-label="Notificaciones" className="ml-2">
          <svg width="22" height="24" viewBox="0 0 22 24">
            <path d="M1 2h14v11H8l-3 3v-3H1z" fill="#fff" />
            <path d="M3 5h10M3 7.5h10M3 10h7" stroke="#1b2740" />
            <circle cx="14" cy="16" r="7.5" fill="#3c4350" stroke="#9aa0a8" />
            <text x="14" y="19.5" textAnchor="middle" fontSize="10" fontWeight="600" fill="#fff">14</text>
          </svg>
        </button>
      </div>
    </footer>
  );
}

export default function App() {
  const [tab, setTab] = useState('PRODUCCIÓN');

  return (
    <div className="flex h-screen flex-col overflow-hidden border-x-[3px] border-black bg-[#f0f0f0] font-['Roboto','Open_Sans',sans-serif] text-[#222]">
      <header className="flex h-[30px] shrink-0 items-start">
        <div className="flex h-[25px] w-[376px] shrink-0 items-center gap-[7px] pl-1">
          <div className="flex flex-1 justify-between">
            {quickTools.map(tool => (
              <button key={tool.label} aria-label={tool.label}><Svg size={15}>{tool.icon}</Svg></button>
            ))}
          </div>
          <button aria-label="Personalizar" className="flex flex-col gap-px border-t border-[#2f5f6f] pt-0.5 text-[#2f5f6f]"><Down /></button>
        </div>
        <h1 className="flex-1 pt-2 text-center text-[11px] leading-4 font-normal">Audaces Patrones Avanzado</h1>
        <div className="flex w-[377px] shrink-0 justify-end gap-[26px] pt-[7px] pr-[11px]">
          <button aria-label="Minimizar"><svg width="8" height="8" viewBox="0 0 8 8"><path d="M1 6h6" stroke="#444" /></svg></button>
          <button aria-label="Restaurar"><svg width="8" height="8" viewBox="0 0 8 8" fill="none" stroke="#444"><path d="M2.5 2V.5h5v4H6M.5 2.5h5v5h-5z" /></svg></button>
          <button aria-label="Cerrar"><svg width="8" height="8" viewBox="0 0 8 8"><path d="M0 0l8 8M8 0L0 8" stroke="#444" /></svg></button>
        </div>
      </header>

      <nav className="flex h-[23px] shrink-0 border-b border-[#d0d0d0] text-[11px]">
        <button className="mr-[3px] w-[65px] shrink-0 bg-[#05708f] pt-px pr-1 text-white">ARCHIVO</button>
        {tabs.map(t => (
          <button
            key={t.name}
            onClick={() => setTab(t.name)}
            className={`shrink-0 pt-[2px] ${t.width} ${tab === t.name ? '-mb-px border-x border-t border-[#d0d0d0] bg-[#fafafa] text-[#155f7f]' : ''}`}
          >
            {t.name}
          </button>
        ))}
        <div className="flex flex-1 items-center justify-end gap-[7px] overflow-hidden text-[10px]">
          <button aria-label="Contraer cinta">
            <svg width="9" height="7" viewBox="0 0 9 7" fill="none"><path d="M1 3.5L4.5.5 8 3.5v2L4.500 3 1 5.500z" stroke="#444" /></svg>
          </button>
          <button className="flex items-center gap-1 pt-px">VISIÓN <Down className="text-[#2f5f6f]" /></button>
          <button className="flex items-center gap-1 pt-px">OPCIONES <Down className="text-[#2f5f6f]" /></button>
          <button className="flex items-center gap-1 pt-px">VENTANAS <Down className="text-[#2f5f6f]" /></button>
          <div className="-ml-1 flex gap-px">
            <button aria-label="Ayuda" className="h-5 w-5 rounded-full bg-[#5f8fb8] text-[16px] leading-5 font-bold text-white">?</button>
            <button aria-label="Información" className="h-5 w-[19px] rounded-l-full bg-[#5f8fb8] font-['DejaVu_Serif',serif] text-[15px] leading-5 font-bold text-white">i</button>
          </div>
        </div>
      </nav>

      <Ribbon />
      <Workspace />

      <div className="flex h-[19px] shrink-0 items-center bg-[#05729a] pt-[2px] text-[11px] text-white">
        <span className="w-[427px]">Crear patrón por intersección</span>
        <span>Seleccione un punto interno (o confirme con el botón derecho del ratón)</span>
      </div>
      <Taskbar />
    </div>
  );
}
